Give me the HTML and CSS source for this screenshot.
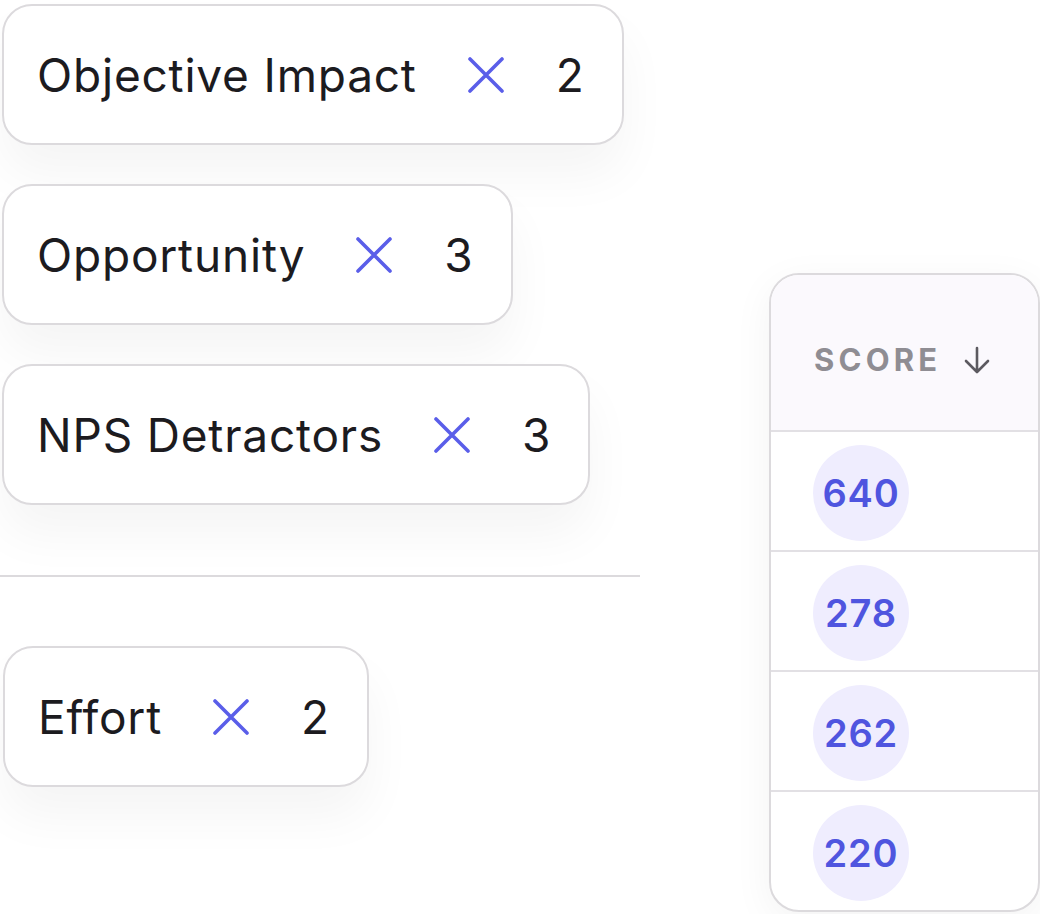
FILE: index.html
```html
<!DOCTYPE html>
<html>
<head>
<meta charset="utf-8">
<link rel="stylesheet" href="styles.css">
</head>
<body>
<div class="page">
  <div class="left">
    <div class="pill p1"><span class="label">Objective Impact</span><svg class="x" viewBox="0 0 36 36"><path d="M2 2 L34 34 M34 2 L2 34"/></svg><span class="num">2</span></div>
    <div class="pill p2"><span class="label">Opportunity</span><svg class="x" viewBox="0 0 36 36"><path d="M2 2 L34 34 M34 2 L2 34"/></svg><span class="num">3</span></div>
    <div class="pill p3"><span class="label">NPS Detractors</span><svg class="x" viewBox="0 0 36 36"><path d="M2 2 L34 34 M34 2 L2 34"/></svg><span class="num">3</span></div>
    <div class="divider"></div>
    <div class="pill p4"><span class="label">Effort</span><svg class="x" viewBox="0 0 36 36"><path d="M2 2 L34 34 M34 2 L2 34"/></svg><span class="num">2</span></div>
  </div>
  <div class="table">
    <div class="thead"><span class="th">SCORE</span><svg class="arrow" viewBox="0 0 28 28"><path d="M14 2 V25 M3 15 L14 26 L25 15"/></svg></div>
    <div class="row"><span class="score">640</span></div>
    <div class="row"><span class="score">278</span></div>
    <div class="row"><span class="score">262</span></div>
    <div class="row last"><span class="score">220</span></div>
  </div>
</div>
</body>
</html>
```

FILE: styles.css
```css
html, body {
  margin: 0;
  padding: 0;
  background: #ffffff;
}
body {
  font-family: Inter, "Noto Sans", sans-serif;
  width: 1040px;
  height: 914px;
  overflow: hidden;
}
.page {
  display: flex;
  align-items: flex-start;
}
.left {
  width: 640px;
  padding-top: 4px;
  display: flex;
  flex-direction: column;
  align-items: flex-start;
}
.pill {
  box-sizing: border-box;
  height: 141px;
  margin-left: 2px;
  border: 2px solid #dcdadd;
  border-radius: 30px;
  background: #fff;
  display: flex;
  align-items: center;
  padding: 0 37px 0 33px;
  box-shadow: 0 30px 50px rgba(0, 0, 0, 0.045);
  color: #1c1b1f;
  font-size: 46px;
  font-weight: 400;
  letter-spacing: 0.8px;
}
.p1, .p2 { margin-bottom: 39px; }
.p4 { margin-left: 3px; }
.x {
  width: 36px;
  height: 36px;
  margin: 0 52px 0 51px;
  flex: none;
}
.x path {
  stroke: #5a5ee9;
  stroke-width: 3.6;
  stroke-linecap: round;
  fill: none;
}
.num { font-size: 46px; }
.divider {
  width: 640px;
  height: 2px;
  background: #dcdadd;
  margin: 70px 0 69px;
}
.table {
  box-sizing: border-box;
  margin-left: 129px;
  margin-top: 273px;
  width: 271px;
  border: 2px solid #dcdadd;
  border-radius: 30px;
  overflow: hidden;
  background: #fff;
  box-shadow: 0 10px 40px rgba(0, 0, 0, 0.05);
}
.thead {
  height: 157px;
  background: #fbf9fd;
  border-bottom: 2px solid #e2e0e4;
  display: flex;
  align-items: center;
  padding-left: 43px;
  padding-top: 14px;
  box-sizing: border-box;
}
.th {
  color: #8f8d93;
  font-size: 31px;
  font-weight: 700;
  letter-spacing: 4.2px;
}
.arrow {
  width: 28px;
  height: 28px;
  margin-left: 22px;
}
.arrow path {
  stroke: #5c5a60;
  stroke-width: 2.6;
  fill: none;
  stroke-linecap: round;
  stroke-linejoin: round;
}
.row {
  height: 120px;
  box-sizing: border-box;
  border-bottom: 2px solid #e2e0e4;
  display: flex;
  align-items: center;
  padding-left: 42px;
  padding-top: 4px;
}
.row.last { border-bottom: none; height: 118px; }
.score {
  width: 96px;
  height: 96px;
  border-radius: 50%;
  background: #efedfe;
  color: #4f55df;
  font-size: 38px;
  font-weight: 600;
  letter-spacing: 0.8px;
  display: flex;
  align-items: center;
  justify-content: center;
}
```
